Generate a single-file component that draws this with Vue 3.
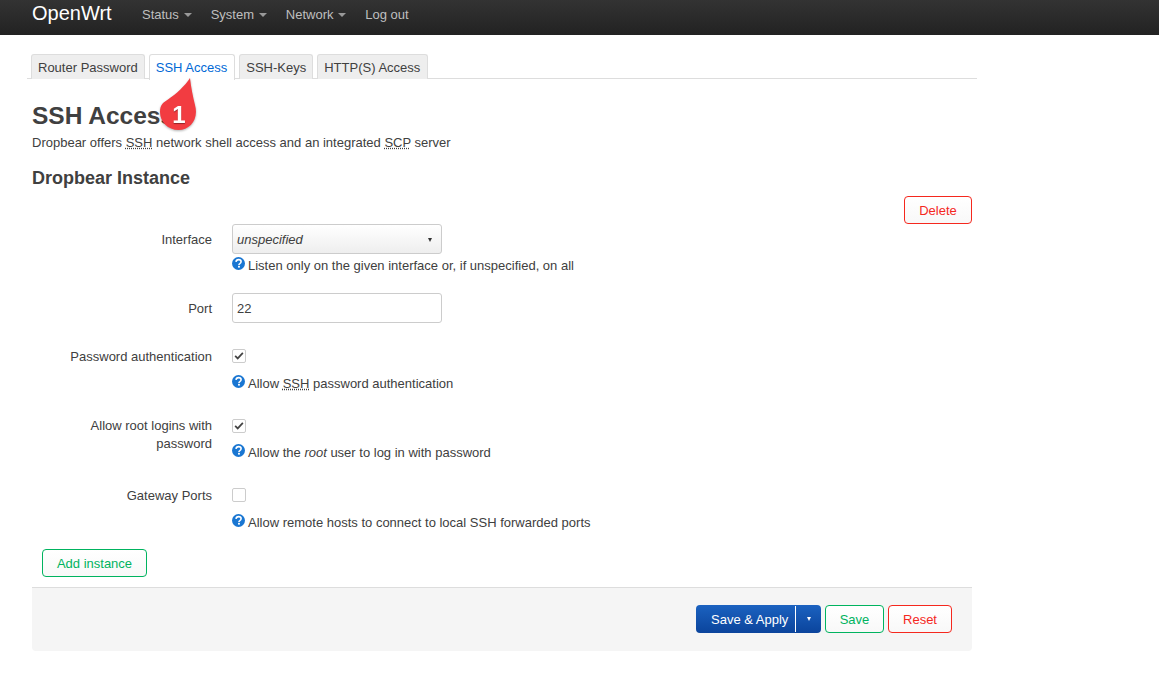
<template>
  <div class="page">
    <svg class="defs" width="0" height="0">
      <symbol id="help" viewBox="0 0 14 14">
        <circle cx="7" cy="7" r="7" fill="#1976d2" />
        <path d="M4.300 5.300C4.400 3.700 5.500 2.800 7.100 2.800 8.700 2.800 9.800 3.700 9.800 5 9.800 6.100 9.100 6.600 8.400 7.100 7.800 7.500 7.500 7.900 7.500 8.600" fill="none" stroke="#fff" stroke-width="1.700" />
        <rect x="6.500" y="9.500" width="2" height="1.900" fill="#fff" />
      </symbol>
      <symbol id="tick" viewBox="0 0 14 14">
        <path d="M2.500 6.800 5.500 9.800 11.500 3.400" fill="none" stroke="#444" stroke-width="2" />
      </symbol>
    </svg>

    <header class="topbar">
      <span class="brand">OpenWrt</span>
      <nav class="menu">
        <a v-for="m in menus" :key="m" class="menu-item">{{ m }}<i class="caret"></i></a>
        <a class="menu-item">Log out</a>
      </nav>
    </header>

    <main class="content">
      <ul class="tabs">
        <li v-for="t in tabs" :key="t" class="tab" :class="{ active: t === 'SSH Access' }">{{ t }}</li>
      </ul>

      <h2 class="title">SSH Access</h2>
      <p class="desc">Dropbear offers <abbr>SSH</abbr> network shell access and an integrated <abbr>SCP</abbr> server</p>
      <h3 class="subtitle">Dropbear Instance</h3>

      <div class="delete-row">
        <button class="btn btn-red btn-delete">Delete</button>
      </div>

      <div class="row row-text">
        <label class="label">Interface</label>
        <div class="field">
          <div class="select"><em>unspecified</em><i class="select-arrow"></i></div>
          <div class="help help-tight">
            <svg class="help-icon"><use href="#help" /></svg>
            <span>Listen only on the given interface or, if unspecified, on all</span>
          </div>
        </div>
      </div>

      <div class="row row-text row-port">
        <label class="label">Port</label>
        <div class="field">
          <div class="input">22</div>
        </div>
      </div>

      <div class="row row-check row-password">
        <label class="label">Password authentication</label>
        <div class="field">
          <div class="check"><svg><use href="#tick" /></svg></div>
          <div class="help">
            <svg class="help-icon"><use href="#help" /></svg>
            <span>Allow <abbr>SSH</abbr> password authentication</span>
          </div>
        </div>
      </div>

      <div class="row row-check row-root">
        <label class="label">Allow root logins with password</label>
        <div class="field">
          <div class="check"><svg><use href="#tick" /></svg></div>
          <div class="help help-root">
            <svg class="help-icon"><use href="#help" /></svg>
            <span>Allow the <em>root</em> user to log in with password</span>
          </div>
        </div>
      </div>

      <div class="row row-check row-gateway">
        <label class="label">Gateway Ports</label>
        <div class="field">
          <div class="check"></div>
          <div class="help">
            <svg class="help-icon"><use href="#help" /></svg>
            <span>Allow remote hosts to connect to local SSH forwarded ports</span>
          </div>
        </div>
      </div>

      <button class="btn btn-green btn-add">Add instance</button>

      <footer class="actions">
        <div class="split">
          <span class="split-main">Save &amp; Apply</span>
          <span class="split-toggle"><i></i></span>
        </div>
        <button class="btn btn-green btn-save">Save</button>
        <button class="btn btn-red btn-reset">Reset</button>
      </footer>
    </main>

    <!-- step marker over the tab -->
    <div class="marker">
      <svg viewBox="0 0 40 56" width="40" height="56">
        <path d="M31 1C32 10 34 20 36 28C40 42 31 53 19.500 53C9 53 1 45 1 35C1 27 5 25 9 22.500C17 17 26 9 31 1Z" fill="#f23c41" />
      </svg>
      <span class="marker-num">1</span>
    </div>
  </div>
</template>

<script setup>
const menus = ['Status', 'System', 'Network']
const tabs = ['Router Password', 'SSH Access', 'SSH-Keys', 'HTTP(S) Access']
</script>

<style>
html, body {
  margin: 0;
  background: #fff;
}
</style>

<style scoped>
.page {
  position: relative;
  height: 694px;
  overflow: hidden;
  font-family: "Liberation Sans", Arial, sans-serif;
  font-size: 13px;
  line-height: 18px;
  color: #404040;
}
.defs {
  position: absolute;
}

.topbar {
  height: 35px;
  display: flex;
  align-items: flex-start;
  padding-left: 32px;
  background-image: linear-gradient(180deg, #333, #222);
}
.brand {
  color: #fff;
  font-size: 20px;
  line-height: 27px;
  width: 110px;
}
.menu {
  display: flex;
  gap: 18.800px;
}
.menu-item {
  color: #bfbfbf;
  line-height: 29px;
}
.caret {
  display: inline-block;
  margin-left: 5px;
  vertical-align: 2px;
  border-left: 4px solid transparent;
  border-right: 4px solid transparent;
  border-top: 4px solid #999;
}

.content {
  width: 940px;
  margin-left: 32px;
}

.tabs {
  list-style: none;
  display: flex;
  gap: 4px;
  margin: 19px -5px 0 -5px;
  padding: 0 0 0 4px;
  height: 24px;
  border-bottom: 1px solid #ddd;
}
.tab {
  height: 24px;
  padding: 0 6px;
  line-height: 25px;
  background: #eee;
  border: 1px solid #ddd;
  border-bottom: none;
  border-radius: 3px 3px 0 0;
}
.tab.active {
  height: 25px;
  padding-right: 7px;
  background: #fff;
  color: #0069d6;
}
.tab:last-child {
  padding-right: 7px;
}

.title {
  margin: 20px 0 0;
  font-size: 24.500px;
  line-height: 33px;
  font-weight: bold;
}
.desc {
  margin: 2px 0 0;
  line-height: 18px;
}
abbr {
  text-decoration: underline dotted;
  text-underline-offset: 1px;
}
.subtitle {
  margin: 15px 0 0;
  font-size: 18px;
  line-height: 22px;
  font-weight: bold;
}

.delete-row {
  display: flex;
  justify-content: flex-end;
  margin-top: 7px;
}

.btn {
  height: 28px;
  box-sizing: border-box;
  padding: 2px 0 0;
  background: linear-gradient(#fff, #f8f8f8);
  border: 1px solid;
  border-radius: 4px;
  font: inherit;
}
.btn-red {
  color: #f5281e;
  border-color: #f5281e;
}
.btn-green {
  color: #00b35f;
  border-color: #00b35f;
}
.btn-delete {
  width: 68px;
}

.row {
  display: flex;
}
.label {
  width: 180px;
  margin-right: 20px;
  text-align: right;
}
.field {
  flex: 1;
}
.row-text .label {
  padding-top: 7px;
}
.row-check .label {
  margin-top: -1px;
}
.row-root .label {
  margin-top: -2px;
}
.row-port {
  margin-top: 18px;
}
.row-password {
  margin-top: 26px;
}
.row-root {
  margin-top: 26px;
}
.row-gateway {
  margin-top: 26px;
}

.select {
  width: 210px;
  height: 30px;
  box-sizing: border-box;
  display: flex;
  align-items: center;
  justify-content: space-between;
  padding: 2px 9px 0 4px;
  background: linear-gradient(#fff, #eee);
  border: 1px solid #ccc;
  border-radius: 3px;
}
.select-arrow {
  border-left: 2.500px solid transparent;
  border-right: 2.500px solid transparent;
  border-top: 4px solid #333;
}
.input {
  width: 210px;
  height: 30px;
  box-sizing: border-box;
  padding: 0 4px;
  line-height: 29px;
  border: 1px solid #ccc;
  border-radius: 3px;
}
.check {
  width: 14px;
  height: 14px;
  box-sizing: border-box;
  border: 1px solid #ccc;
  border-radius: 2px;
  background: #fff;
}
.check svg {
  display: block;
  width: 12px;
  height: 12px;
}
.help {
  display: flex;
  align-items: flex-start;
  gap: 3px;
  margin-top: 12px;
}
.help-tight {
  margin-top: 3px;
}
.help-root {
  margin-top: 11px;
}
.help-icon {
  width: 13px;
  height: 13px;
  flex: none;
}

.btn-add {
  display: block;
  width: 105px;
  margin: 17px 0 0 10px;
}

.actions {
  display: flex;
  justify-content: flex-end;
  gap: 4px;
  height: 64px;
  box-sizing: border-box;
  margin-top: 10px;
  padding: 17px 20px 0 0;
  background: #f5f5f5;
  border-top: 1px solid #ddd;
  border-radius: 0 0 4px 4px;
}
.split {
  display: flex;
  width: 125px;
  height: 28px;
  color: #fff;
  background: linear-gradient(#1b62c0, #0b449c);
  border-radius: 4px;
}
.split-main {
  flex: 1;
  padding-left: 15px;
  border-right: 1px solid #fff;
  height: 26px;
  margin-top: 1px;
  line-height: 27px;
}
.split-toggle {
  width: 25px;
  display: flex;
  align-items: center;
  justify-content: center;
}
.split-toggle i {
  border-left: 2.500px solid transparent;
  border-right: 2.500px solid transparent;
  border-top: 4px solid #fff;
}
.btn-save {
  width: 59px;
}
.btn-reset {
  width: 64px;
}

.marker {
  position: absolute;
  left: 159px;
  top: 77px;
  width: 40px;
  height: 56px;
  filter: drop-shadow(0 1px 1px rgba(0, 0, 0, 0.3));
}
.marker svg {
  display: block;
}
.marker-num {
  position: absolute;
  left: 0;
  width: 40px;
  top: 23px;
  text-align: center;
  color: #fff;
  font-size: 24px;
  line-height: 30px;
  font-weight: bold;
  text-shadow: 0 1px 1px rgba(0, 0, 0, 0.4);
}
</style>
